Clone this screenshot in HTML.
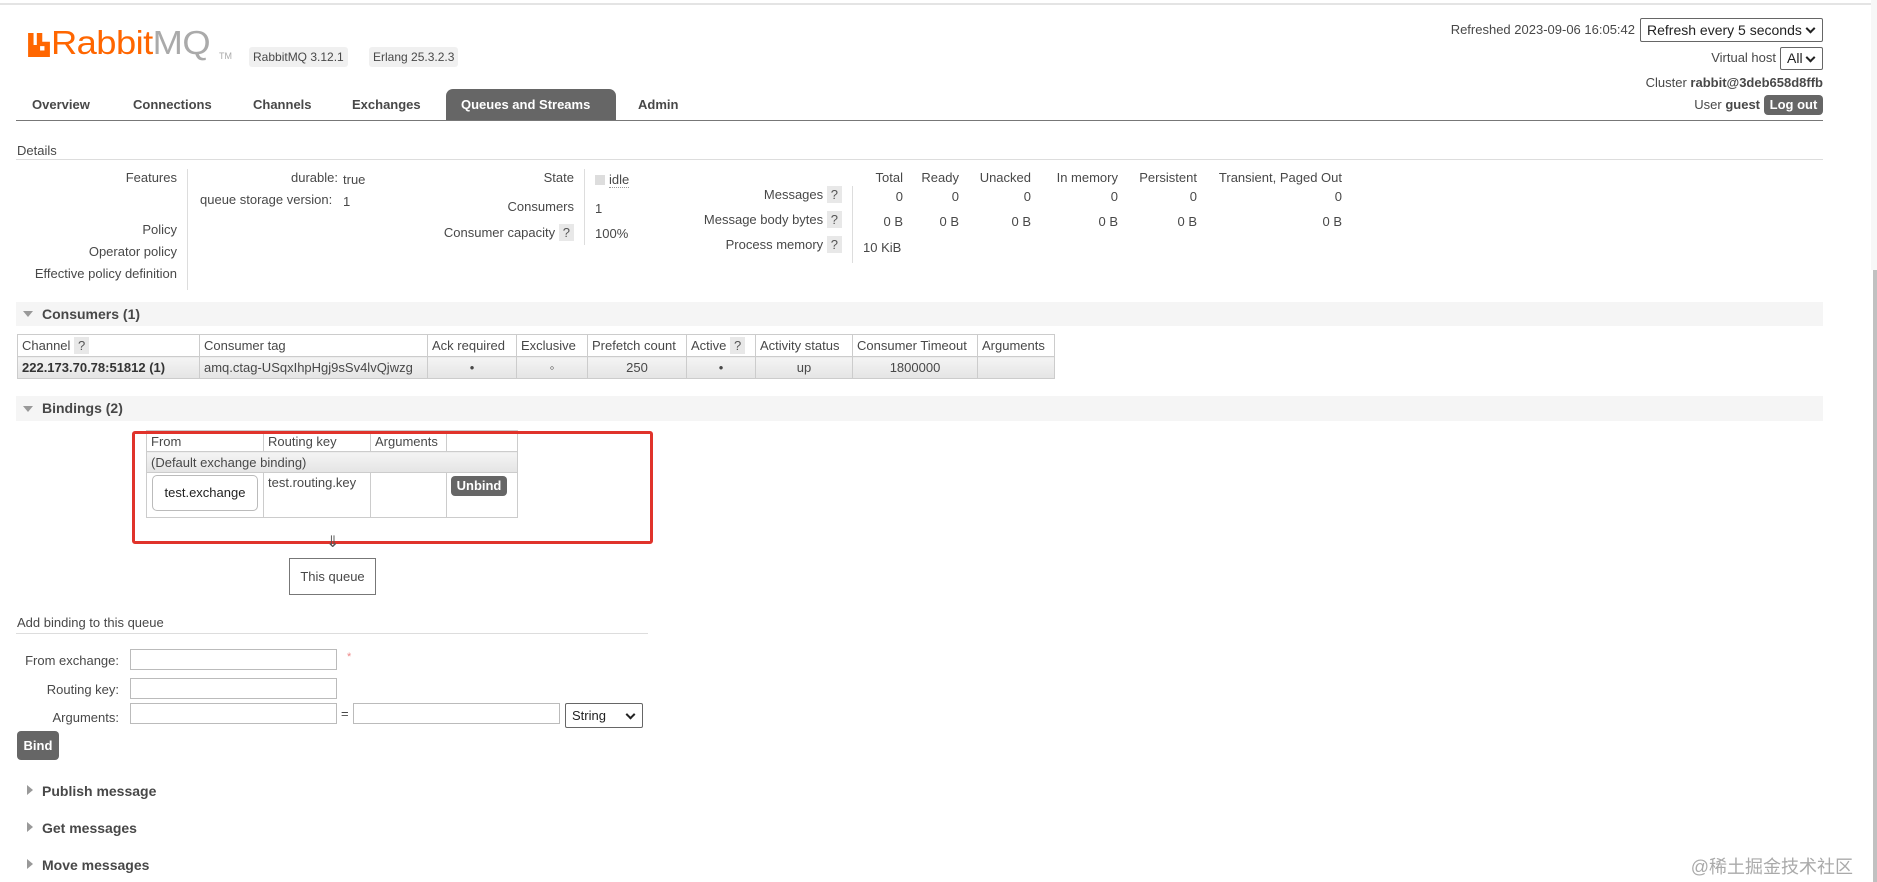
<!DOCTYPE html>
<html><head><meta charset="utf-8"><style>
*{margin:0;padding:0;box-sizing:border-box}
body{width:1877px;height:882px;position:relative;background:#fff;font-family:"Liberation Sans","Noto Sans CJK SC",sans-serif;font-size:13px;color:#484848;overflow:hidden}
.a{position:absolute;white-space:nowrap}
.r{text-align:right}
.b{font-weight:bold}
.q{display:inline-block;background:#e8e8e8;padding:1px 4px;color:#555}
.hl{position:absolute;background:#ddd}
.band{position:absolute;left:16px;width:1807px;background:#f5f5f5}
.tri{position:absolute;width:0;height:0}
table{border-collapse:collapse;position:absolute}
td,th{border:1px solid #ccc;font-weight:normal;padding:0 4px;white-space:nowrap;text-align:left}
.dr td{background:linear-gradient(#f4f4f4,#e4e4e4)}
input.t{position:absolute;height:21px;border:1px solid #bbb;background:#fff}
.btn{position:absolute;background:#666;color:#fff;font-weight:bold;border-radius:4px;text-align:center}
.sel{position:absolute;border:1px solid #666;border-radius:2px;background:#fff;color:#222;font-size:14px;padding-left:6px}
.sel:after{content:"";position:absolute;right:8px;top:50%;width:5px;height:5px;border-right:2px solid #222;border-bottom:2px solid #222;transform:translateY(-70%) rotate(45deg)}
</style></head><body>
<div class="hl" style="left:0;top:3px;width:1877px;height:2px;background:#e4e4e4"></div>
<div class="a" style="left:1871px;top:0;width:6px;height:270px;background:#f7f7f7"></div>
<div class="a" style="left:1873px;top:270px;width:4px;height:612px;background:#c1c1c1"></div>

<!-- logo -->
<svg class="a" style="left:28px;top:33px" width="22" height="24" viewBox="0 0 20 22"><path d="M0 0h5v11h3V0h5v8h7v14H0z M11 12v4h4v-4z" fill="#f60" fill-rule="evenodd"/></svg>
<div class="a" style="left:51px;top:24px;font-size:33px;color:#f60;letter-spacing:-0.5px;transform:scaleX(1.1);transform-origin:left top">Rabbit<span style="color:#aaa">MQ</span></div>
<div class="a" style="left:219px;top:51px;font-size:9px;color:#aaa">TM</div>
<div class="a" style="left:249px;top:47px;height:20px;line-height:20px;background:#f0f0f0;padding:0 4px;border-radius:3px;font-size:12px">RabbitMQ 3.12.1</div>
<div class="a" style="left:369px;top:47px;height:20px;line-height:20px;background:#f0f0f0;padding:0 4px;border-radius:3px;font-size:12px">Erlang 25.3.2.3</div>

<!-- nav -->
<div class="a" style="left:446px;top:89px;width:170px;height:31px;background:#666;border-radius:7px 7px 0 0"></div>
<div class="a b" style="left:32px;top:97px;font-size:13px">Overview</div>
<div class="a b" style="left:133px;top:97px">Connections</div>
<div class="a b" style="left:253px;top:97px">Channels</div>
<div class="a b" style="left:352px;top:97px">Exchanges</div>
<div class="a b" style="left:461px;top:97px;color:#fff">Queues and Streams</div>
<div class="a b" style="left:638px;top:97px">Admin</div>
<div class="hl" style="left:16px;top:120px;width:1807px;height:1px;background:#777"></div>

<!-- right header -->
<div class="a r" style="right:242px;top:22px">Refreshed 2023-09-06 16:05:42</div>
<div class="sel" style="left:1640px;top:18px;width:183px;height:24px;line-height:22px">Refresh every 5 seconds</div>
<div class="a r" style="right:101px;top:50px">Virtual host</div>
<div class="sel" style="left:1780px;top:47px;width:43px;height:23px;line-height:21px">All</div>
<div class="a r" style="right:54px;top:75px">Cluster <b>rabbit@3deb658d8ffb</b></div>
<div class="a r" style="right:117px;top:97px">User <b>guest</b></div>
<div class="btn" style="left:1764px;top:95px;width:59px;height:20px;line-height:20px">Log out</div>

<!-- details -->
<div class="a" style="left:17px;top:143px">Details</div>
<div class="hl" style="left:16px;top:159px;width:1807px;height:1px"></div>
<div class="a r" style="right:1700px;top:170px">Features</div>
<div class="a r" style="right:1700px;top:222px">Policy</div>
<div class="a r" style="right:1700px;top:244px">Operator policy</div>
<div class="a r" style="right:1700px;top:266px">Effective policy definition</div>
<div class="hl" style="left:187px;top:169px;width:1px;height:121px"></div>
<div class="a r" style="right:1539px;top:170px">durable:</div><div class="a" style="left:343px;top:172px">true</div>
<div class="a" style="left:200px;top:192px">queue storage version:</div><div class="a" style="left:343px;top:194px">1</div>

<div class="a r" style="right:1303px;top:170px">State</div>
<div class="a r" style="right:1303px;top:199px">Consumers</div>
<div class="a r" style="right:1303px;top:224px">Consumer capacity <span class="q">?</span></div>
<div class="hl" style="left:584px;top:169px;width:1px;height:76px"></div>
<div class="a" style="left:595px;top:175px;width:10px;height:10px;background:#ddd"></div>
<div class="a" style="left:609px;top:172px;border-bottom:1px dotted #999">idle</div>
<div class="a" style="left:595px;top:201px">1</div>
<div class="a" style="left:595px;top:226px">100%</div>

<div class="a r" style="right:974px;top:170px">Total</div>
<div class="a r" style="right:918px;top:170px">Ready</div>
<div class="a r" style="right:846px;top:170px">Unacked</div>
<div class="a r" style="right:759px;top:170px">In memory</div>
<div class="a r" style="right:680px;top:170px">Persistent</div>
<div class="a r" style="right:535px;top:170px">Transient, Paged Out</div>
<div class="a r" style="right:1035px;top:186px">Messages <span class="q">?</span></div>
<div class="a r" style="right:1035px;top:211px">Message body bytes <span class="q">?</span></div>
<div class="a r" style="right:1035px;top:236px">Process memory <span class="q">?</span></div>
<div class="hl" style="left:852px;top:186px;width:1px;height:77px"></div>
<div class="a r" style="right:974px;top:189px">0</div><div class="a r" style="right:918px;top:189px">0</div><div class="a r" style="right:846px;top:189px">0</div><div class="a r" style="right:759px;top:189px">0</div><div class="a r" style="right:680px;top:189px">0</div><div class="a r" style="right:535px;top:189px">0</div>
<div class="a r" style="right:974px;top:214px">0 B</div><div class="a r" style="right:918px;top:214px">0 B</div><div class="a r" style="right:846px;top:214px">0 B</div><div class="a r" style="right:759px;top:214px">0 B</div><div class="a r" style="right:680px;top:214px">0 B</div><div class="a r" style="right:535px;top:214px">0 B</div>
<div class="a" style="left:863px;top:240px">10 KiB</div>

<!-- consumers -->
<div class="band" style="top:302px;height:24px"></div>
<div class="tri" style="left:23px;top:311px;border-left:5px solid transparent;border-right:5px solid transparent;border-top:6px solid #999"></div>
<div class="a b" style="left:42px;top:306px;font-size:14px">Consumers (1)</div>
<table style="left:17px;top:334px;width:1038px">
<tr style="height:22px"><th style="width:182px">Channel <span class="q">?</span></th><th style="width:228px">Consumer tag</th><th style="width:89px">Ack required</th><th style="width:71px">Exclusive</th><th style="width:99px">Prefetch count</th><th style="width:69px">Active <span class="q">?</span></th><th style="width:97px">Activity status</th><th style="width:125px">Consumer Timeout</th><th>Arguments</th></tr>
<tr class="dr" style="height:22px"><td class="b" style="color:#333">222.173.70.78:51812 (1)</td><td>amq.ctag-USqxIhpHgj9sSv4lvQjwzg</td><td style="text-align:center">•</td><td style="text-align:center">◦</td><td style="text-align:center">250</td><td style="text-align:center">•</td><td style="text-align:center">up</td><td style="text-align:center">1800000</td><td></td></tr>
</table>

<!-- bindings -->
<div class="band" style="top:396px;height:25px"></div>
<div class="tri" style="left:23px;top:406px;border-left:5px solid transparent;border-right:5px solid transparent;border-top:6px solid #999"></div>
<div class="a b" style="left:42px;top:400px;font-size:14px">Bindings (2)</div>
<table style="left:146px;top:430px;width:372px">
<tr style="height:21px"><th style="width:117px">From</th><th style="width:107px">Routing key</th><th style="width:76px">Arguments</th><th></th></tr>
<tr class="dr" style="height:21px"><td colspan="4">(Default exchange binding)</td></tr>
<tr style="height:45px"><td style="padding:2px 5px;vertical-align:top"><div style="border:1px solid #bbb;border-radius:5px;height:36px;line-height:34px;text-align:center;color:#222">test.exchange</div></td><td style="vertical-align:top;padding-top:2px">test.routing.key</td><td></td><td style="vertical-align:top;padding-top:3px"><div style="background:#666;color:#fff;font-weight:bold;border-radius:4px;width:56px;height:20px;line-height:20px;text-align:center">Unbind</div></td></tr>
</table>
<div class="a" style="left:132px;top:431px;width:521px;height:113px;border:3px solid #e0332b;border-radius:3px"></div>
<div class="a" style="left:326px;top:532px;font-size:16px;color:#555">⇓</div>
<div class="a" style="left:289px;top:558px;width:87px;height:37px;border:1px solid #777;line-height:35px;text-align:center">This queue</div>

<!-- add binding -->
<div class="a" style="left:17px;top:615px">Add binding to this queue</div>
<div class="hl" style="left:16px;top:633px;width:632px;height:1px"></div>
<div class="a r" style="right:1758px;top:653px">From exchange:</div>
<div class="a r" style="right:1758px;top:682px">Routing key:</div>
<div class="a r" style="right:1758px;top:710px">Arguments:</div>
<input class="t" style="left:130px;top:649px;width:207px">
<div class="a" style="left:347px;top:651px;color:#e88;font-size:11px">*</div>
<input class="t" style="left:130px;top:678px;width:207px">
<input class="t" style="left:130px;top:703px;width:207px">
<div class="a" style="left:341px;top:706px">=</div>
<input class="t" style="left:353px;top:703px;width:207px">
<div class="sel" style="left:565px;top:703px;width:78px;height:25px;line-height:23px;font-size:13px">String</div>
<div class="btn" style="left:17px;top:731px;width:42px;height:29px;line-height:29px">Bind</div>

<div class="tri" style="left:27px;top:785px;border-top:5px solid transparent;border-bottom:5px solid transparent;border-left:6px solid #999"></div>
<div class="a b" style="left:42px;top:783px;font-size:14px">Publish message</div>
<div class="tri" style="left:27px;top:822px;border-top:5px solid transparent;border-bottom:5px solid transparent;border-left:6px solid #999"></div>
<div class="a b" style="left:42px;top:820px;font-size:14px">Get messages</div>
<div class="tri" style="left:27px;top:859px;border-top:5px solid transparent;border-bottom:5px solid transparent;border-left:6px solid #999"></div>
<div class="a b" style="left:42px;top:857px;font-size:14px">Move messages</div>

<div class="a r" style="right:24px;top:853px;font-size:18px;color:#aaa">@稀土掘金技术社区</div>
</body></html>
